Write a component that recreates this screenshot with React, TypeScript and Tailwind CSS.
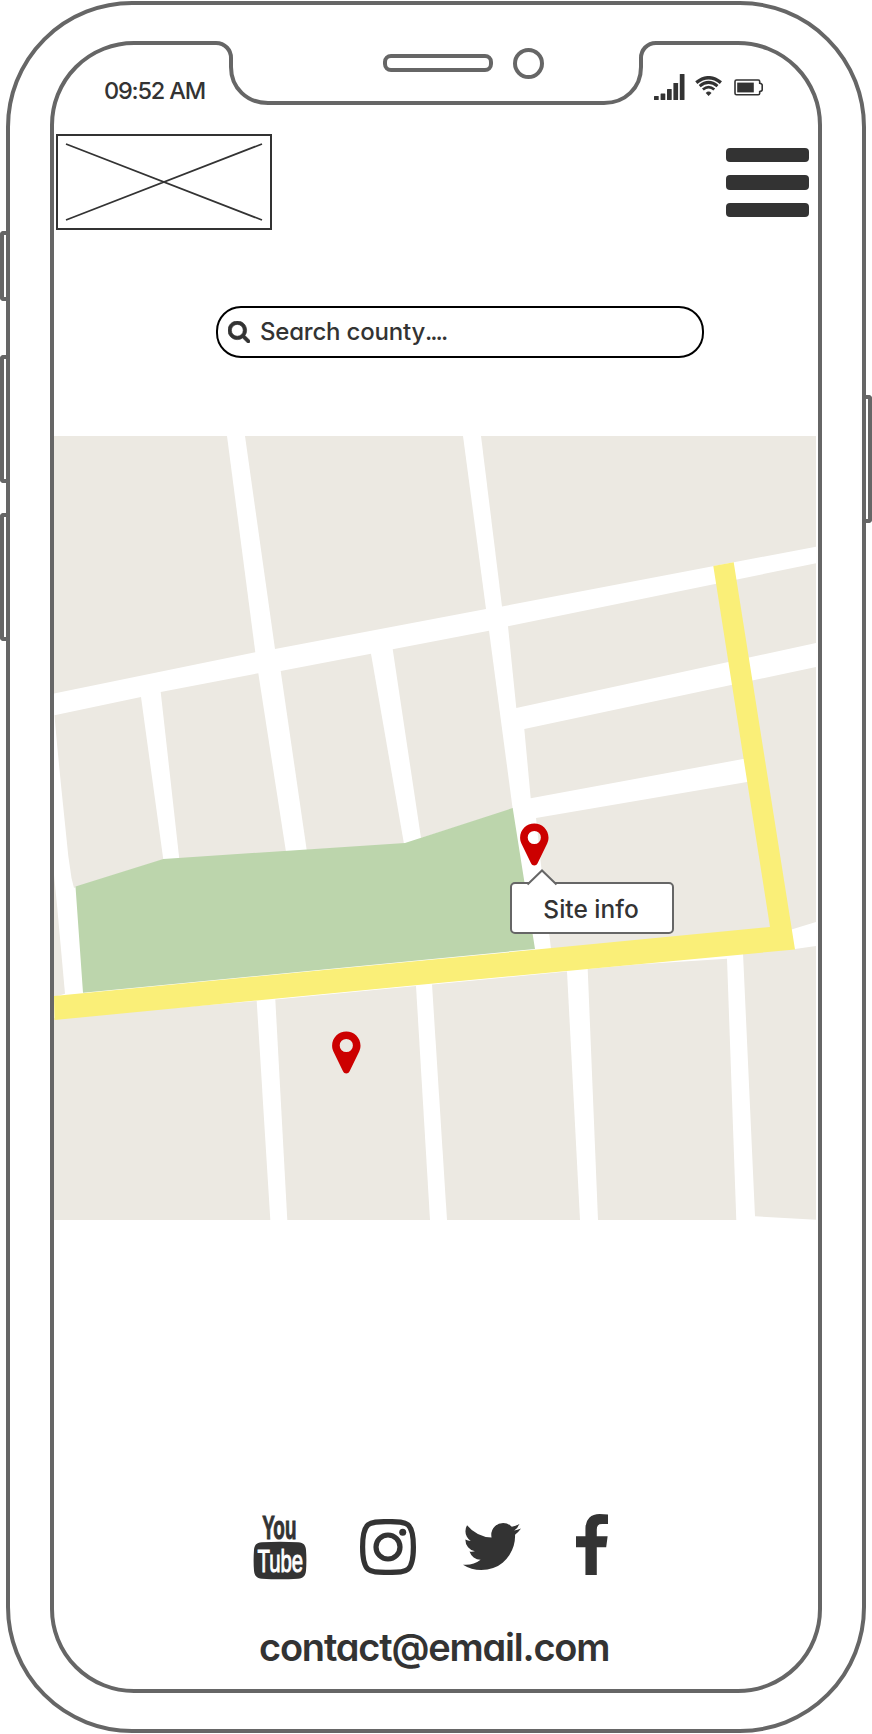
import React from "react";

const FONT = "font-['Inter','Liberation_Sans',sans-serif] [font-feature-settings:'cv11'] text-[#333333]";

function SignalIcon() {
  return (
    <svg className="h-[26px] w-[31px]" viewBox="0 0 31 26" fill="#333333">
      <rect x="0" y="22" width="4.700" height="4" rx="0.500" />
      <rect x="6.600" y="19.500" width="4.700" height="6.500" rx="0.500" />
      <rect x="13" y="15" width="4.700" height="11" rx="0.500" />
      <rect x="19.400" y="9" width="4.700" height="17" rx="0.500" />
      <rect x="25.800" y="0" width="4.700" height="26" rx="0.500" />
    </svg>
  );
}

function WifiIcon() {
  return (
    <svg className="h-[20px] w-[28px]" viewBox="0 0 28 20" fill="none" stroke="#333333">
      <path d="M1.300 6.600 Q13.600 -3.200 25.900 6.600" strokeWidth="3.400" />
      <path d="M4.700 10.100 Q13.600 2.700 22.500 10.100" strokeWidth="3" />
      <path d="M7.900 13.500 Q13.600 8.700 19.300 13.500" strokeWidth="2.800" />
      <path d="M10.700 17 Q13.600 14.200 16.500 17 L13.600 19.900 Z" fill="#333333" stroke="none" />
    </svg>
  );
}

function BatteryIcon() {
  return (
    <svg className="h-[17px] w-[30px]" viewBox="0 0 30 17">
      <path
        d="M2.500 1 H24.300 Q25.700 1 25.700 2.400 V4.200 Q28.200 4.600 28.200 6 V10.800 Q28.200 12.200 25.700 12.600 V14.300 Q25.700 15.700 24.300 15.700 H2.500 Q1 15.700 1 14.300 V2.400 Q1 1 2.500 1 Z"
        fill="white"
        stroke="#333333"
        strokeWidth="1.600"
      />
      <rect x="3.200" y="3.600" width="16.600" height="9.800" fill="#333333" />
    </svg>
  );
}

function Pin() {
  return (
    <svg className="h-[43px] w-[29px]" viewBox="0 0 29 43">
      <path
        fill="#cc0000"
        fillRule="evenodd"
        d="M14.300 0.400 C22 0.400 28.500 6.500 28.500 14.600 C28.500 17 28 18.800 27.200 20.500 L17.600 40.200 C16.900 41.700 15.600 42.400 14.300 42.400 C13 42.400 11.700 41.700 11 40.200 L1.400 20.500 C0.600 18.800 0.100 17 0.100 14.600 C0.100 6.500 6.600 0.400 14.300 0.400 Z M14.300 7.900 A6.600 6.600 0 1 0 14.300 21.100 A6.600 6.600 0 1 0 14.300 7.900 Z"
      />
    </svg>
  );
}

const blocks = [
  "54,436 227,436 255.300,652.300 54,693.500",
  "245,436 463,436 486,609 275,649",
  "481,436 816,436 816,546.700 502,606.500",
  "54.500,715.300 141,697 163.300,859.500 76,887 74,888 71.500,878 68.300,856 61,785 57,744",
  "160.700,692 258.300,673.300 286,852 179.300,859",
  "280.700,671 371,653.700 404,844 306.700,850",
  "392.700,649.300 489,630.700 512.700,809 421,838",
  "508,626.200 816,563.300 816,643 516.300,708",
  "524.300,729 816,667 816,922 780,933 760,758 743,759 530.700,798.300",
  "536,818 747,782 755,782 775,936 551,949 541,865",
  "54,875 57,905 65,993.700 54,997",
  "54,1018 256.700,1001 270.300,1220 54,1220",
  "275.300,999.500 416,986 430,1220 287.300,1220",
  "432,984.500 567,971.500 580,1220 447,1220",
  "587.700,969 640,964.300 727,958.700 736.300,1220 598,1220",
  "743,953 795,949 816,946 816,1219.700 755,1216.300",
];

function StreetMap() {
  return (
    <svg className="block h-[784px] w-[762px]" viewBox="54 436 762 784">
      {blocks.map((points) => (
        <polygon key={points} points={points} fill="#ece9e2" />
      ))}
      <polygon points="75.500,886.500 163.300,859 405,843 512.700,808 535,949 83,992.700" fill="#bcd5ac" />
      <polygon
        points="54,996 436,959.300 770,927 713.300,566 733.700,562.300 795,949.500 436,983.300 54.500,1020"
        fill="#faef78"
      />
    </svg>
  );
}

function YouTubeIcon() {
  return (
    <svg className="h-[66px] w-[54px] overflow-visible" viewBox="0 0 54 66">
      <text
        transform="translate(9.200 25.300) scale(0.570 1)"
        fontSize="33"
        fontWeight="700"
        fill="#333333"
        stroke="#333333"
        strokeWidth="1"
        textLength="60"
        lengthAdjust="spacingAndGlyphs"
        className="font-['Liberation_Sans',sans-serif]"
      >
        You
      </text>
      <path
        d="M9 28.300 Q27 27.200 45 28.300 C51 28.700 52.600 31.500 53 36 Q53.800 46.500 53 56.500 C52.600 61.500 50.500 64.300 45 64.700 Q27 66 9 64.700 C3.500 64.300 1.400 61.500 1 56.500 Q0.200 46.500 1 36 C1.400 31.500 3 28.700 9 28.300 Z"
        fill="#333333"
      />
      <text
        transform="translate(4.500 58) scale(0.600 1)"
        fontSize="32"
        fill="white"
        stroke="white"
        strokeWidth="1"
        textLength="76"
        lengthAdjust="spacingAndGlyphs"
        className="font-['Liberation_Sans',sans-serif]"
      >
        Tube
      </text>
    </svg>
  );
}

function InstagramIcon() {
  return (
    <svg className="h-[56px] w-[56px]" viewBox="0 0 56 56" fill="none" stroke="#333333">
      <path
        d="M28 2.600 C46 2.600 53.400 1.500 53.400 28 C53.400 54.500 46 53.400 28 53.400 C10 53.400 2.600 54.500 2.600 28 C2.600 1.500 10 2.600 28 2.600 Z"
        strokeWidth="5.200"
      />
      <circle cx="28" cy="28" r="12" strokeWidth="5.200" />
      <circle cx="42.700" cy="13.300" r="3.500" fill="#333333" stroke="none" />
    </svg>
  );
}

function TwitterIcon() {
  return (
    <svg className="h-[47px] w-[58px]" viewBox="108 256 1576 1280" preserveAspectRatio="none" fill="#333333">
      <path d="M1684 408q-67 98-162 167 1 14 1 42 0 130-38 259.500t-115.500 248.500-184.500 210.500-258 146-323 54.500q-271 0-496-145 35 4 78 4 225 0 401-138-105-2-188-64.500t-114-159.500q33 5 61 5 43 0 85-11-112-23-185.500-111.500t-73.500-205.500v-4q68 38 146 41-66-44-105-115t-39-154q0-88 44-163 121 149 294.500 238.500t371.500 99.500q-8-38-8-74 0-134 94.500-228.500t228.500-94.500q140 0 236 102 109-21 205-78-37 115-142 178 93-10 186-50z" />
    </svg>
  );
}

function FacebookIcon() {
  return (
    <svg className="h-[61px] w-[32px]" viewBox="479 0 864 1664" preserveAspectRatio="none" fill="#333333">
      <path d="M1343 12v264h-157q-86 0-116 36t-30 108v189h293l-39 296h-254v759h-306v-759h-255v-296h255v-218q0-186 104-288.500t277-102.500q147 0 228 12z" />
    </svg>
  );
}

function Notch() {
  return (
    <div className="absolute top-[-4px] left-[156px] h-[64px] w-[452px]">
      <svg className="block h-[64px] w-[452px]" viewBox="210 41 452 64">
        <rect x="216" y="40" width="439" height="8" fill="white" />
        <path
          d="M210 43 H216 C225 43 231 50 231 58 V67 C231 88 247 103 268 103 H604 C625 103 641 88 641 67 V58 C641 50 647 43 656 43 H662"
          fill="none"
          stroke="#666666"
          strokeWidth="4"
        />
      </svg>
      <div className="absolute top-[13px] left-[173px] h-[18px] w-[110px] rounded-[8px] border-4 border-[#666666]" />
      <div className="absolute top-[7px] left-[303px] h-[31px] w-[31px] rounded-full border-4 border-[#666666]" />
    </div>
  );
}

export default function App() {
  return (
    <div className={`relative h-[1734px] w-[872px] overflow-hidden bg-white pt-px pl-[6px] ${FONT}`}>
      <div className="absolute top-[231px] left-0 h-[70px] w-[6px] rounded-l-[4px] border-4 border-r-0 border-[#666666]" />
      <div className="absolute top-[355px] left-0 h-[128px] w-[6px] rounded-l-[4px] border-4 border-r-0 border-[#666666]" />
      <div className="absolute top-[513px] left-0 h-[128px] w-[6px] rounded-l-[4px] border-4 border-r-0 border-[#666666]" />
      <div className="absolute top-[395px] right-0 h-[128px] w-[6px] rounded-r-[4px] border-4 border-l-0 border-[#666666]" />

      <div className="h-[1732px] w-[860px] rounded-[126px] border-4 border-[#666666] px-[40px] py-[36px]">
        <div className="relative flex h-[1652px] w-[772px] flex-col rounded-[84px] border-4 border-[#666666]">
          <Notch />
          <div className="flex h-[89px] items-start justify-between pr-[54px] pl-[50px]">
            <span className="mt-[29px] text-[23.500px] leading-[34px] font-medium tracking-[-1.200px] whitespace-nowrap">
              09:52 AM
            </span>
            <div className="flex items-start">
              <div className="mt-[29px]"><SignalIcon /></div>
              <div className="mt-[31px] ml-[10px]"><WifiIcon /></div>
              <div className="mt-[34px] ml-[11px]"><BatteryIcon /></div>
            </div>
          </div>

          <header className="flex h-[96px] items-start justify-between pr-[9px] pl-[2px]">
            <div className="h-[96px] w-[216px] border-2 border-[#333333]">
              <svg className="block h-[92px] w-[212px]" viewBox="0 0 212 92" stroke="#333333" strokeWidth="1.800">
                <path d="M8 8 L204 84 M204 8 L8 84" />
              </svg>
            </div>
            <button className="mt-[14px] flex flex-col gap-[13px]" aria-label="Menu">
              <span className="block h-[14.300px] w-[83px] rounded-[4px] bg-[#333333]" />
              <span className="block h-[14.300px] w-[83px] rounded-[4px] bg-[#333333]" />
              <span className="block h-[14.300px] w-[83px] rounded-[4px] bg-[#333333]" />
            </button>
          </header>

          <div className="mt-[76px] ml-[162px] flex h-[52px] w-[488px] items-center rounded-[25px] border-2 border-black pl-[10px]">
            <svg className="h-[22px] w-[22px]" viewBox="64 128 1664 1664" fill="#333333" stroke="#333333" strokeWidth="50">
              <path d="M1216 832q0-185-131.500-316.500t-316.500-131.500-316.500 131.500-131.500 316.500 131.500 316.500 316.500 131.500 316.500-131.500 131.500-316.500zm512 832q0 52-38 90t-90 38q-54 0-90-38l-343-342q-179 124-399 124-143 0-273.500-55.500t-225-150-150-225-55.500-273.500 55.500-273.500 150-225 225-150 273.500-55.500 273.500 55.500 225 150 150 225 55.500 273.500q0 220-124 399l343 343q37 37 37 90z" />
            </svg>
            <span className="ml-[10px] text-[24px] leading-[32px] font-medium tracking-[-0.200px] whitespace-nowrap">
              Search county<span className="tracking-[-2px]">....</span>
            </span>
          </div>

          <div className="relative mt-[78px]">
            <StreetMap />
            <div className="absolute top-[387px] left-[465.500px]"><Pin /></div>
            <div className="absolute top-[595px] left-[277.500px]"><Pin /></div>
            <div className="absolute top-[446px] left-[456px] flex h-[52px] w-[164px] items-center justify-center rounded-[5px] border-2 border-[#666666] bg-white">
              <svg className="absolute top-[-15px] left-[14px] h-[18px] w-[32px]" viewBox="0 0 32 18">
                <path d="M2 18 V15.500 L16 1.500 L30 15.500 V18 Z" fill="white" />
                <path d="M1.500 15.500 L16 1.500 L30.500 15.500" fill="none" stroke="#666666" strokeWidth="2" />
              </svg>
              <span className="mt-[2px] mr-[2px] text-[24.500px] leading-[32px] font-medium whitespace-nowrap">
                Site info
              </span>
            </div>
          </div>

          <footer className="mt-[293px]">
            <div className="flex items-start pl-[198.500px]">
              <div className="mt-px"><YouTubeIcon /></div>
              <div className="mt-[6px] ml-[53px]"><InstagramIcon /></div>
              <div className="mt-[10px] ml-[47px]"><TwitterIcon /></div>
              <div className="mt-px ml-[55px]"><FacebookIcon /></div>
            </div>
            <p className="mt-[43px] pl-[205px] text-[38px] leading-[48px] font-semibold tracking-[-1.200px] whitespace-nowrap">
              contact@email.com
            </p>
          </footer>
        </div>
      </div>
    </div>
  );
}
